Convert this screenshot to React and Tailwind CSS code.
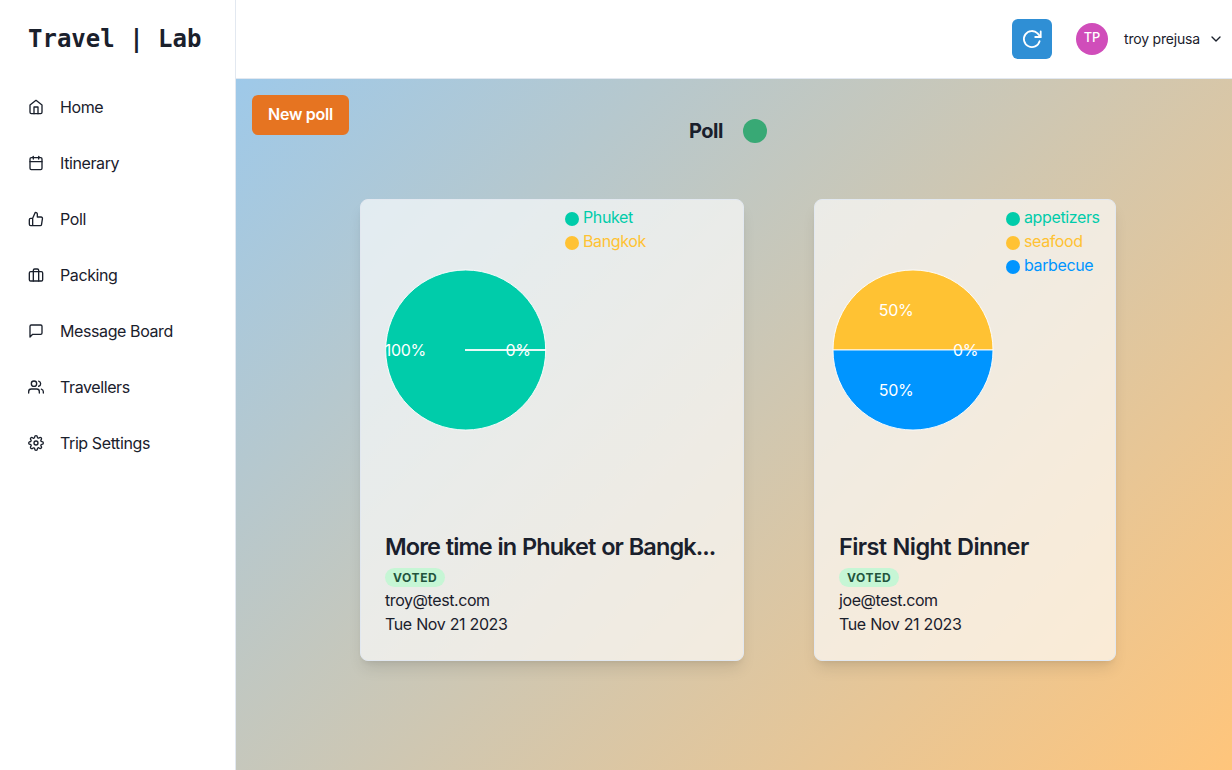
import React from "react";
import { FiHome, FiCalendar, FiThumbsUp, FiBriefcase, FiMessageSquare, FiUsers, FiSettings, FiChevronDown } from "react-icons/fi";

const nav = [
  [FiHome, "Home"],
  [FiCalendar, "Itinerary"],
  [FiThumbsUp, "Poll"],
  [FiBriefcase, "Packing"],
  [FiMessageSquare, "Message Board"],
  [FiUsers, "Travellers"],
  [FiSettings, "Trip Settings"],
];

function RefreshIcon() {
  return (
    <svg width="20" height="20" viewBox="0 0 20 20" fill="none" stroke="currentColor" strokeWidth="1.8" strokeLinecap="round" strokeLinejoin="round">
      <path d="M17.6 12.2A8 8 0 1 1 15.6 4.4L18.3 7.6" />
      <path d="M18.7 2.4V8H13.2" strokeLinejoin="miter" />
    </svg>
  );
}

function Legend({ items }) {
  return (
    <ul className="tracking-[-0.38px]">
      {items.map(([name, color]) => (
        <li key={name} className="flex h-6 items-center gap-1 leading-6" style={{ color }}>
          <span className="mt-[3px] size-3.5 rounded-full" style={{ background: color }} />
          {name}
        </li>
      ))}
    </ul>
  );
}

function Details({ title, email, titleStyle }) {
  return (
    <div className="px-6 tracking-[-0.42px] [word-spacing:0.4px]">
      <h2 className={"leading-[28.8px] font-semibold whitespace-nowrap [word-spacing:0.8px] " + titleStyle}>{title}</h2>
      <div className="flex h-[26px] items-end">
        <span className="mb-[1px] rounded-full bg-[#c6f6d5] px-2 text-xs leading-[19px] font-bold tracking-[0.6px] text-[#22543d]">VOTED</span>
      </div>
      <p className="leading-6">{email}</p>
      <p className="leading-6">Tue Nov 21 2023</p>
    </div>
  );
}

const card = "flex h-[462px] flex-col rounded-lg border border-[#e2e8f0] bg-white/65 shadow-lg";

export default function App() {
  return (
    <div className="flex h-[770px] w-[1232px] overflow-hidden bg-white font-['Inter',sans-serif] text-base text-[#1a202c]">
      <aside className="w-[236px] shrink-0 border-r border-[#e2e8f0]">
        <h1 className="flex h-[79px] items-center pb-0.5 pl-7 font-['DejaVu_Sans_Mono',monospace] text-2xl font-bold">Travel | Lab</h1>
        <nav className="tracking-[-0.4px]">
          {nav.map(([Icon, label]) => (
            <a key={label} className="flex h-14 items-center gap-4 pl-7">
              <Icon size={16} />
              {label}
            </a>
          ))}
        </nav>
      </aside>
      <div className="flex flex-1 flex-col">
        <header className="flex h-[79px] items-center justify-end border-b border-[#e2e8f0] pr-2">
          <button className="flex size-10 items-center justify-center rounded-md bg-[#2f8fd5] text-white">
            <RefreshIcon />
          </button>
          <span className="ml-6 flex size-8 items-center justify-center rounded-full bg-[#d04dba] pb-0.5 text-[12.8px] font-medium tracking-[-0.1px] text-white">TP</span>
          <span className="ml-4 w-[76px] text-sm tracking-[-0.2px] whitespace-nowrap">troy prejusa</span>
          <FiChevronDown size={16} className="ml-2" />
        </header>
        <main className="flex flex-1 flex-col bg-[linear-gradient(135deg,#9ec9e9,#ffc57b)] px-4 pt-4">
          <button className="h-10 w-[97px] rounded-md bg-[#e67421] pb-0.5 font-semibold tracking-[-0.25px] text-white">New poll</button>
          <div className="-mt-4 flex h-6 items-center justify-center gap-5 pr-3 text-xl font-bold tracking-[-0.5px]">
            Poll
            <span className="size-6 rounded-full bg-[#38a975]" />
          </div>
          <div className="mt-14 flex gap-[70px] pl-[108px]">
            <article className={card + " w-[384px]"}>
              <div className="flex h-[333px] pt-[5px]">
                <svg width="204" height="300" className="overflow-visible tracking-[-0.3px]">
                  <g stroke="#fff" strokeOpacity="0.9">
                    <circle cx="104.7" cy="145" r="80" fill="#00ccaa" />
                    <path d="M104 145H185" strokeWidth="2" />
                  </g>
                  <g fill="#fff">
                    <text x="65" y="151" textAnchor="end">100%</text>
                    <text x="144.5" y="151">0%</text>
                  </g>
                </svg>
                <Legend items={[["Phuket", "#00ccaa"], ["Bangkok", "#ffc233"]]} />
              </div>
              <Details title="More time in Phuket or Bangk..." email="troy@test.com" titleStyle="text-[23.5px] tracking-[-0.92px]" />
            </article>
            <article className={card + " w-[302px]"}>
              <div className="flex h-[333px] pt-[5px]">
                <svg width="191" height="300" className="overflow-visible tracking-[-0.3px]">
                  <g stroke="#fff" strokeOpacity="0.9">
                    <path d="M178 145A80 80 0 0 0 18 145Z" fill="#ffc233" />
                    <path d="M18 145A80 80 0 0 0 178 145Z" fill="#0095ff" />
                  </g>
                  <g fill="#fff">
                    <text x="98.5" y="111" textAnchor="end">50%</text>
                    <text x="98.5" y="191" textAnchor="end">50%</text>
                    <text x="138" y="151">0%</text>
                  </g>
                </svg>
                <Legend items={[["appetizers", "#00ccaa"], ["seafood", "#ffc233"], ["barbecue", "#0095ff"]]} />
              </div>
              <Details title="First Night Dinner" email="joe@test.com" titleStyle="text-[23.5px] tracking-[-0.6px]" />
            </article>
          </div>
        </main>
      </div>
    </div>
  );
}
